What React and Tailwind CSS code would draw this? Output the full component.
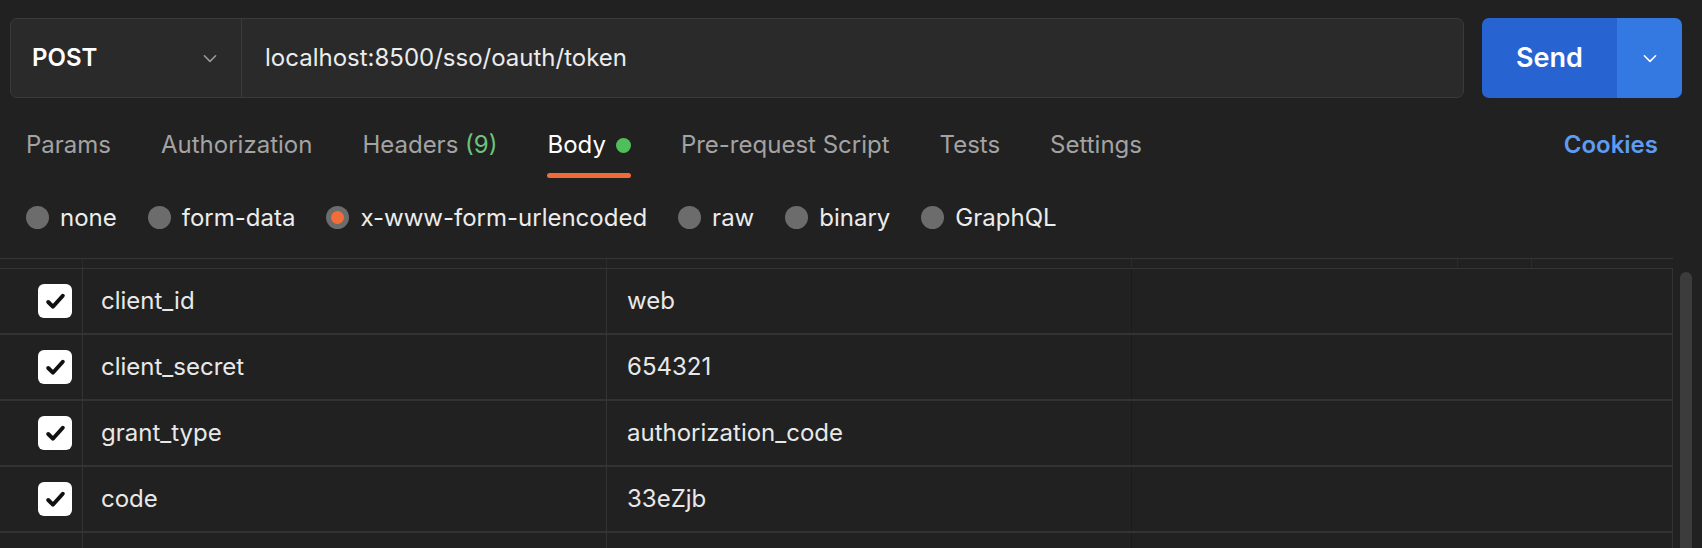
import React from "react";

function Chevron({ className }) {
  return (
    <svg viewBox="0 0 16 16" className={className} fill="none" stroke="currentColor" strokeWidth="1.4" strokeLinecap="round" strokeLinejoin="round">
      <path d="M3 6l5 5 5-5" />
    </svg>
  );
}

function Check() {
  return (
    <span className="flex h-[34px] w-[34px] items-center justify-center rounded-[6px] bg-white">
      <svg viewBox="0 0 24 24" className="h-[25px] w-[25px]" fill="none" stroke="#111" strokeWidth="3.8" strokeLinecap="round" strokeLinejoin="round">
        <path d="M5 12.5l4.5 4.5L19 6.5" />
      </svg>
    </span>
  );
}

function App() {
  /* tabs */
  const tabs = [
    { label: "Params" },
    { label: "Authorization" },
    { label: "Headers", count: "(9)" },
    { label: "Body", active: true },
    { label: "Pre-request Script" },
    { label: "Tests" },
    { label: "Settings" },
  ];

  const bodyTypes = [
    { label: "none" },
    { label: "form-data" },
    { label: "x-www-form-urlencoded", checked: true },
    { label: "raw" },
    { label: "binary" },
    { label: "GraphQL" },
  ];

  const params = [
    { key: "client_id", value: "web" },
    { key: "client_secret", value: "654321" },
    { key: "grant_type", value: "authorization_code" },
    { key: "code", value: "33eZjb" },
  ];

  return (
    <div
      className="h-[548px] w-[1702px] overflow-hidden bg-[#212121] text-[#e6e6e6]"
      style={{ fontFamily: "Inter, 'Noto Sans', sans-serif" }}
    >
      {/* request bar */}
      <div className="flex gap-[18px] pl-[10px] pr-[20px] pt-[18px]">
        <div className="flex h-[80px] flex-1 rounded-[7px] border border-[#3a3a3a] bg-[#2a2a2a]">
          <div className="flex w-[231px] items-center justify-between border-r border-[#3a3a3a] pl-[21px] pr-[22px]">
            <span className="text-[24px] font-semibold text-white">POST</span>
            <Chevron className="h-[18px] w-[18px] text-[#9a9a9a]" />
          </div>
          <div className="flex items-center pl-[23px] text-[24px] text-[#ececec]">
            localhost:8500/sso/oauth/token
          </div>
        </div>
        <div className="flex h-[80px] w-[200px] overflow-hidden rounded-[7px]">
          <div className="flex w-[135px] items-center justify-center bg-[#2764d2] text-[27px] font-semibold text-white">
            Send
          </div>
          <div className="flex flex-1 items-center justify-center bg-[#3478e2]">
            <Chevron className="h-[18px] w-[18px] text-white" />
          </div>
        </div>
      </div>

      {/* tabs */}
      <div className="mt-[20px] flex h-[60px] items-stretch pl-[26px] pr-[44px]">
        <div className="flex gap-[50px]">
          {tabs.map((tab) => (
            <div key={tab.label} className="flex flex-col">
              <div className="flex flex-1 items-center gap-[10px] pb-[1px] text-[24px]">
                <span className={tab.active ? "text-white" : "text-[#a3a3a3]"}>
                  {tab.label}
                  {tab.count && <span className="text-[#6fc27c]"> {tab.count}</span>}
                </span>
                {tab.active && <span className="h-[15px] w-[15px] rounded-full bg-[#4fbf5c]" />}
              </div>
              <div className={`h-[5px] rounded-full ${tab.active ? "bg-[#ef6b3c]" : ""}`} />
            </div>
          ))}
        </div>
        <div className="ml-auto flex items-center pb-[6px] text-[24px] font-semibold text-[#5d9cf0]">
          Cookies
        </div>
      </div>

      {/* body type */}
      <div className="flex h-[80px] items-center gap-[31px] pl-[26px] pb-[1px]">
        {bodyTypes.map((t) => (
          <label key={t.label} className="flex items-center gap-[11px] text-[24px] text-[#ececec]">
            <span className="flex h-[23px] w-[23px] items-center justify-center rounded-full bg-[#6c6c6c]">
              {t.checked && <span className="h-[13px] w-[13px] rounded-full bg-[#f36d3a]" />}
            </span>
            {t.label}
          </label>
        ))}
      </div>

      {/* table */}
      <div className="flex">
        <div className="w-[1673px]">
          <div className="grid h-[11px] grid-cols-[83px_524px_525px_326px_74px_141px] border-y border-[#353535]">
            <div className="border-r border-[#2b2b2b]" />
            <div className="border-r border-[#2b2b2b]" />
            <div className="border-r border-[#2b2b2b]" />
            <div className="border-r border-[#2b2b2b]" />
            <div className="border-r border-[#2b2b2b]" />
            <div />
          </div>
          {params.map((p) => (
            <div
              key={p.key}
              className="grid h-[66px] grid-cols-[83px_524px_525px_1fr] border-b-2 border-r border-[#333] text-[24px]"
            >
              <div className="flex items-center border-r border-[#333] pl-[38px]">
                <Check />
              </div>
              <div className="flex items-center border-r border-[#333] pl-[18px] text-[#e8e8e8]">{p.key}</div>
              <div className="flex items-center border-r border-[#1b1b1b] pl-[20px] text-[#e8e8e8]">{p.value}</div>
              <div />
            </div>
          ))}
          <div className="grid h-[40px] grid-cols-[83px_524px_525px_1fr] border-r border-[#333]">
            <div className="border-r border-[#333]" />
            <div className="border-r border-[#333]" />
            <div className="border-r border-[#1b1b1b]" />
            <div />
          </div>
        </div>
        <div className="ml-[7px] mt-[14px] h-[300px] w-[12px] rounded-full bg-[#3c3c3c]" />
      </div>
    </div>
  );
}

export default App;
